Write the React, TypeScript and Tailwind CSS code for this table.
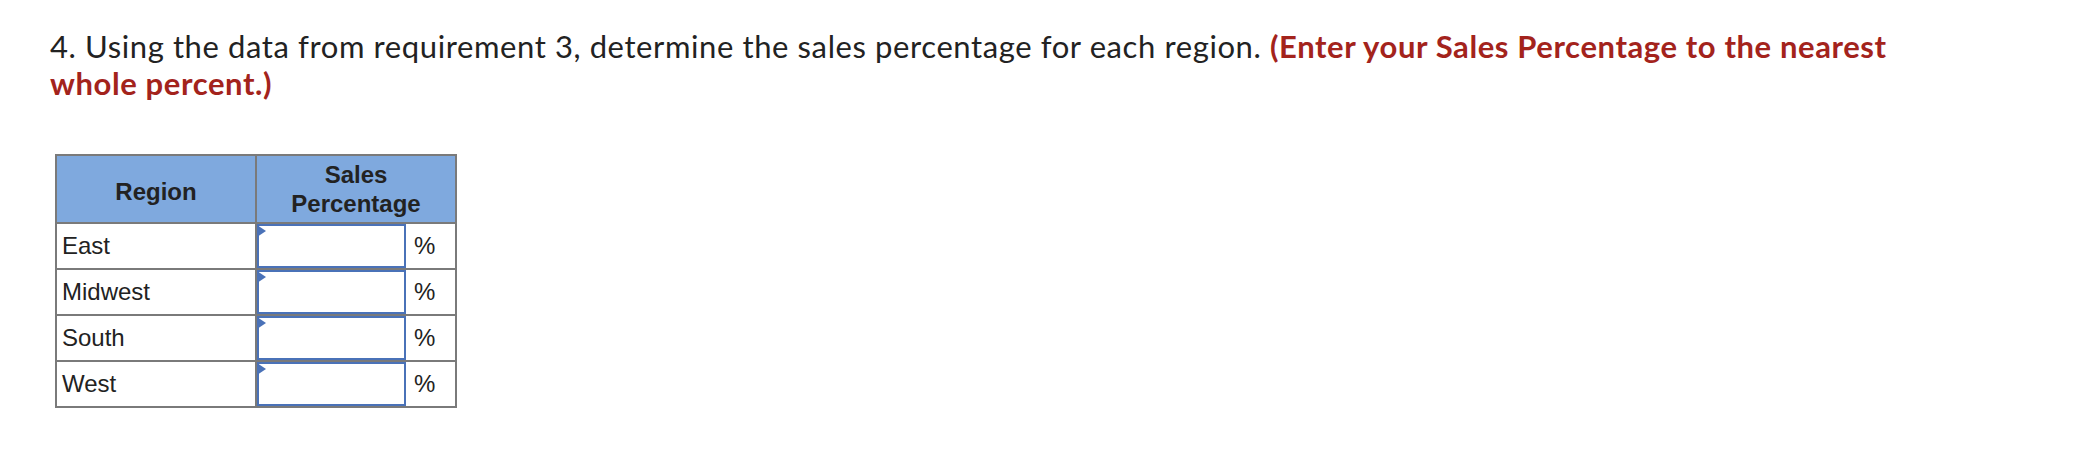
import React from 'react';

const regions = ['East', 'Midwest', 'South', 'West'];

const PercentInput: React.FC = () => (
  <div className="flex h-[44px] items-stretch">
    <div className="relative w-[149px] border-2 border-[#4a72b8] bg-white">
      {/* little marker in the corner */}
      <div className="absolute -left-[2px] -top-[1px] h-0 w-0 border-y-[6px] border-l-[9px] border-y-transparent border-l-[#4a72b8]" />
    </div>
    <div className="flex flex-1 items-center pl-[8px] text-[24px]">%</div>
  </div>
);

export default function App() {
  return (
    <div className="min-h-[464px] w-[2080px] bg-white pl-[50px] pt-[28px] text-[#222]">
      <p className="font-['Lato',sans-serif] text-[31px] leading-[37px] tracking-[0.6px] whitespace-nowrap">
        <span>4. Using the data from requirement 3, determine the sales percentage for each region. </span>
        <span className="font-bold text-[#a3231c]">(Enter your Sales Percentage to the nearest</span>
        <br />
        <span className="font-bold text-[#a3231c]">whole percent.)</span>
      </p>

      <table className="ml-[5px] mt-[52px] border-collapse font-['Liberation_Sans',Arial,sans-serif] text-[24px]">
        <thead>
          <tr className="bg-[#7fa9de]">
            <th className="h-[68px] w-[200px] border-2 border-[#7a7a7a] pt-[5px] font-bold">Region</th>
            <th className="w-[200px] border-2 border-[#7a7a7a] font-bold leading-[29px]">
              Sales
              <br />
              Percentage
            </th>
          </tr>
        </thead>
        <tbody>
          {regions.map((r) => (
            <tr key={r}>
              <td className="h-[44px] border-2 border-[#7a7a7a] pl-[5px]">{r}</td>
              <td className="border-2 border-[#7a7a7a] p-0">
                <PercentInput />
              </td>
            </tr>
          ))}
        </tbody>
      </table>
    </div>
  );
}
